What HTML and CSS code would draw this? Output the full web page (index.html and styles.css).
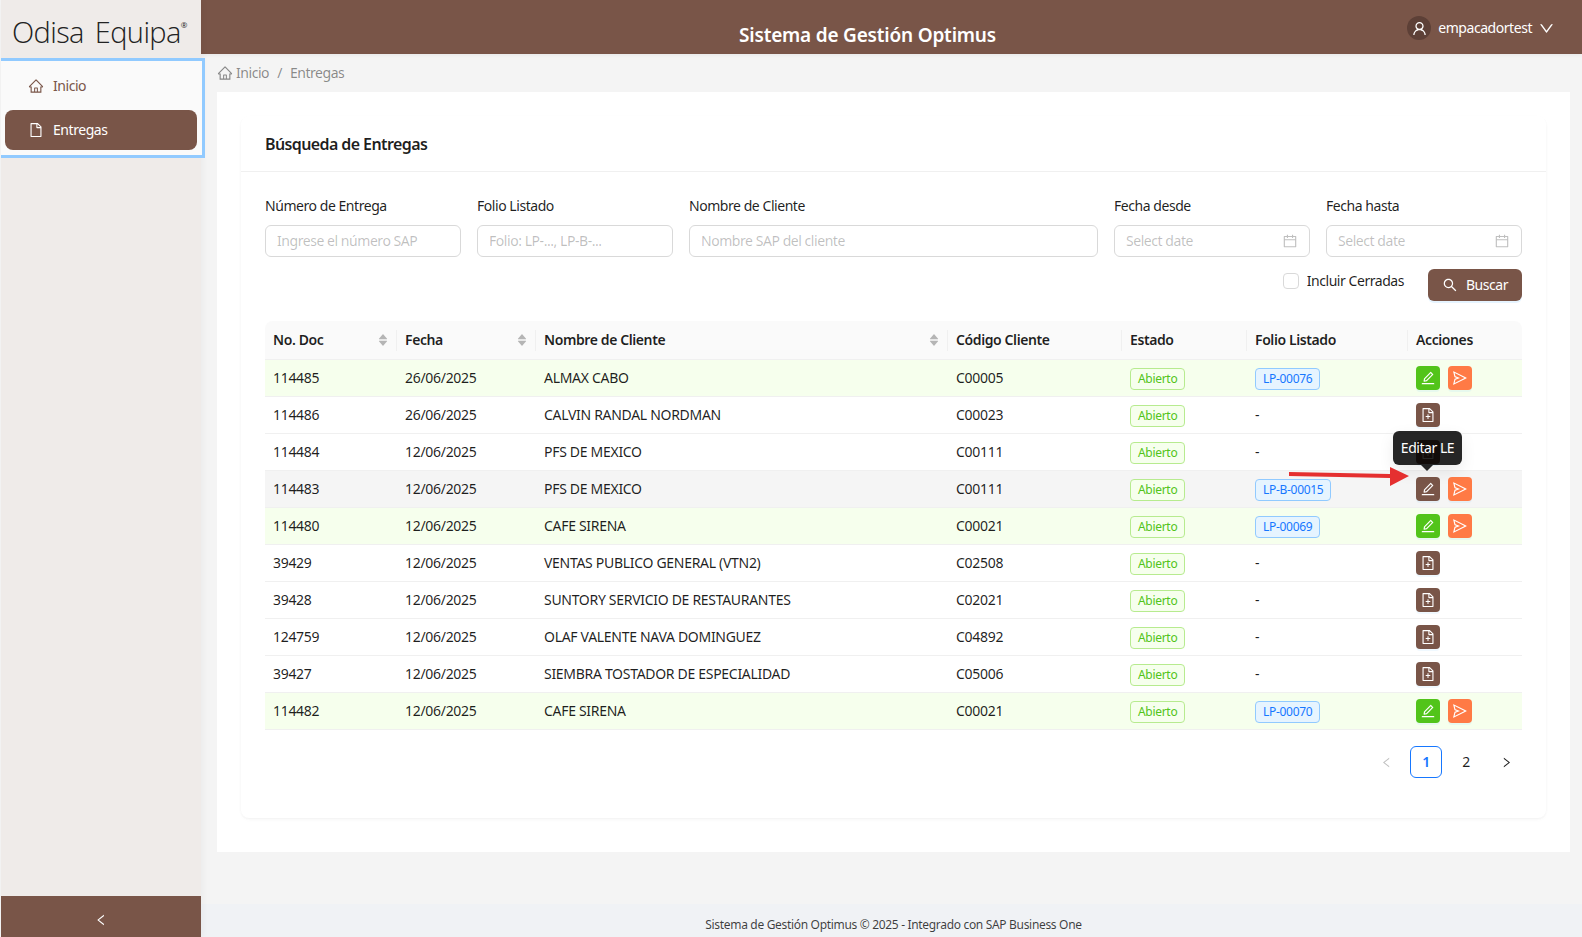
FILE: index.html
```html
<!DOCTYPE html>
<html lang="es">
<head>
<meta charset="utf-8">
<title>Sistema de Gestión Optimus</title>
<link rel="stylesheet" href="styles.css">
</head>
<body>
<svg class="defs" width="0" height="0" aria-hidden="true">
  <symbol id="i-home" viewBox="0 0 1024 1024"><path d="M946.5 505L560.1 118.8l-25.9-25.9a31.5 31.5 0 0 0-44.4 0L77.5 505a63.9 63.9 0 0 0-18.8 46c.4 35.2 29.7 63.3 64.9 63.3h42.5V940h691.8V614.3h43.4c17.1 0 33.2-6.7 45.3-18.8a63.6 63.6 0 0 0 18.7-45.3c0-17-6.7-33.1-18.8-45.2zM568 868H456V664h112v204zm217.9-325.7V868H632V640c0-22.1-17.9-40-40-40H432c-22.1 0-40 17.9-40 40v228H238.1V542.3h-96l370-369.7 23.1 23.1L882 542.3h-96.1z"/></symbol>
  <symbol id="i-file" viewBox="0 0 1024 1024"><path d="M854.6 288.6L639.4 73.4c-6-6-14.1-9.4-22.6-9.4H192c-17.7 0-32 14.3-32 32v832c0 17.7 14.3 32 32 32h640c17.7 0 32-14.3 32-32V311.3c0-8.5-3.4-16.7-9.4-22.7zM790.2 326H602V137.8L790.2 326zm1.8 562H232V136h302v216a42 42 0 0 0 42 42h216v494z"/></symbol>
  <symbol id="i-user" viewBox="0 0 1024 1024"><path d="M858.5 763.6a374 374 0 0 0-80.6-119.5 375.63 375.63 0 0 0-119.5-80.6c-.4-.2-.8-.3-1.2-.5C719.5 518 760 444.7 760 362c0-137-111-248-248-248S264 225 264 362c0 82.7 40.5 156 102.8 201.1-.4.2-.8.3-1.2.5-44.8 18.9-85 46-119.5 80.6a375.63 375.63 0 0 0-80.6 119.5A371.7 371.7 0 0 0 136 901.8a8 8 0 0 0 8 8.2h60c4.4 0 7.9-3.5 8-7.8 2-77.2 33-149.5 87.8-204.3 56.7-56.7 132-87.9 212.2-87.9s155.5 31.2 212.2 87.9C779 752.7 810 825 812 902.2c.1 4.4 3.6 7.8 8 7.8h60a8 8 0 0 0 8-8.2c-1-47.8-10.9-94.3-29.5-138.2zM512 534c-45.9 0-89.1-17.9-121.6-50.4S340 407.9 340 362c0-45.9 17.9-89.1 50.4-121.6S466.1 190 512 190s89.1 17.9 121.6 50.4S684 316.1 684 362c0 45.9-17.9 89.1-50.4 121.6S557.9 534 512 534z"/></symbol>
  <symbol id="i-down" viewBox="0 0 1024 1024"><path d="M884 256h-75c-5.1 0-9.9 2.5-12.9 6.6L512 654.2 227.9 262.6c-3-4.1-7.8-6.6-12.9-6.6h-75c-6.5 0-10.3 7.4-6.5 12.7l352.6 486.1c12.8 17.6 39 17.6 51.7 0l352.6-486.1c3.9-5.3.1-12.7-6.4-12.7z"/></symbol>
  <symbol id="i-left" viewBox="0 0 1024 1024"><path d="M724 218.3V141c0-6.7-7.7-10.4-12.9-6.3L260.3 486.8a31.86 31.86 0 0 0 0 50.3l450.8 352.1c5.3 4.1 12.9.4 12.9-6.3v-77.3c0-4.9-2.3-9.6-6.1-12.6l-360-281 360-281.1c3.8-3 6.1-7.7 6.1-12.6z"/></symbol>
  <symbol id="i-right" viewBox="0 0 1024 1024"><path d="M765.7 486.8L314.9 134.7A7.97 7.97 0 0 0 302 141v77.3c0 4.9 2.3 9.6 6.1 12.6l360 281.1-360 281.1c-3.9 3-6.1 7.7-6.1 12.6V883c0 6.7 7.7 10.4 12.9 6.3l450.8-352.1a31.96 31.96 0 0 0 0-50.4z"/></symbol>
  <symbol id="i-search" viewBox="0 0 1024 1024"><path d="M909.6 854.5L649.9 594.8C690.2 542.7 712 479 712 412c0-80.2-31.3-155.4-87.9-212.1-56.6-56.7-132-87.9-212.1-87.9s-155.5 31.3-212.1 87.9C143.2 256.5 112 331.8 112 412c0 80.1 31.3 155.5 87.9 212.1C256.5 680.8 331.8 712 412 712c67 0 130.6-21.8 182.7-62l259.7 259.6a8.2 8.2 0 0 0 11.6 0l43.6-43.5a8.2 8.2 0 0 0 0-11.6zM570.4 570.4C528 612.7 471.8 636 412 636s-116-23.3-158.4-65.6C211.3 528 188 471.8 188 412s23.3-116.1 65.6-158.4C296 211.3 352.2 188 412 188s116.1 23.2 158.4 65.6S636 352.2 636 412s-23.3 116.1-65.6 158.4z"/></symbol>
  <symbol id="i-cal" viewBox="0 0 1024 1024"><path d="M880 184H712v-64c0-4.4-3.6-8-8-8h-56c-4.4 0-8 3.6-8 8v64H384v-64c0-4.4-3.6-8-8-8h-56c-4.4 0-8 3.6-8 8v64H144c-17.7 0-32 14.3-32 32v664c0 17.7 14.3 32 32 32h736c17.7 0 32-14.3 32-32V216c0-17.7-14.3-32-32-32zm-40 656H184V460h656v380zM184 392V256h128v48c0 4.4 3.6 8 8 8h56c4.4 0 8-3.6 8-8v-48h256v48c0 4.4 3.6 8 8 8h56c4.4 0 8-3.6 8-8v-48h128v136H184z"/></symbol>
  <symbol id="i-edit" viewBox="0 0 1024 1024"><path d="M257.7 752c2 0 4-.2 6-.5L431.9 722c2-.4 3.9-1.3 5.3-2.8l423.9-423.9a9.96 9.96 0 0 0 0-14.1L694.9 114.9c-1.9-1.9-4.4-2.9-7.1-2.9s-5.2 1-7.1 2.9L256.8 538.8c-1.5 1.5-2.4 3.3-2.8 5.3l-29.5 168.2a33.5 33.5 0 0 0 9.4 29.8c6.6 6.4 14.9 9.9 23.8 9.9zm67.4-174.4L687.8 215l73.3 73.3-362.7 362.6-88.9 15.7 15.6-89zM880 836H144c-17.7 0-32 14.3-32 32v36c0 4.4 3.6 8 8 8h784c4.4 0 8-3.6 8-8v-36c0-17.7-14.3-32-32-32z"/></symbol>
  <symbol id="i-send" viewBox="0 0 1024 1024"><path d="M931.4 498.9L94.9 79.5c-3.4-1.7-7.3-2.1-11-1.2a15.99 15.99 0 0 0-11.7 19.3l86.2 352.2c1.3 5.3 5.2 9.6 10.4 11.3l147.7 50.7-147.6 50.7c-5.2 1.8-9.1 6-10.3 11.3L72.2 926.5c-.9 3.7-.5 7.6 1.2 10.9 3.9 7.9 13.5 11.1 21.5 7.2l836.5-417c3.1-1.5 5.6-4.1 7.2-7.1 3.9-8 .7-17.6-7.2-21.6zM170.8 826.3l50.3-205.6 295.2-101.3c2.3-.8 4.2-2.6 5-5 1.4-4.2-.8-8.7-5-10.2L221.1 403 171 198.2l628 314.9-628.2 313.2z"/></symbol>
  <symbol id="i-fileadd" viewBox="0 0 1024 1024"><path d="M854.6 288.6L639.4 73.4c-6-6-14.1-9.4-22.6-9.4H192c-17.7 0-32 14.3-32 32v832c0 17.7 14.3 32 32 32h640c17.7 0 32-14.3 32-32V311.3c0-8.5-3.4-16.7-9.4-22.7zM790.2 326H602V137.8L790.2 326zm1.8 562H232V136h302v216a42 42 0 0 0 42 42h216v494zM544 472c0-4.4-3.6-8-8-8h-48c-4.4 0-8 3.6-8 8v108H372c-4.4 0-8 3.6-8 8v48c0 4.4 3.6 8 8 8h108v108c0 4.4 3.6 8 8 8h48c4.4 0 8-3.6 8-8V644h108c4.4 0 8-3.6 8-8v-48c0-4.4-3.6-8-8-8H544V472z"/></symbol>
  <symbol id="i-sort" viewBox="0 0 1024 1024"><path d="M858.9 409L530.5 28.2c-9.4-10.9-27.5-10.9-37 0L165.1 409c-12.2 14.2-1.2 35 18.5 35h656.8c19.7 0 30.7-20.8 18.5-35z"/><path d="M840.4 580H183.6c-19.7 0-30.7 20.8-18.5 35l328.4 380.8c9.4 10.9 27.5 10.9 37 0L858.9 615c12.2-14.2 1.2-35-18.5-35z"/></symbol>
</svg>

<div class="app">
  <aside class="sidebar">
    <div class="logo">Odisa Equipa<sup class="logo-r">®</sup></div>
    <nav class="menu">
      <a class="menu-item"><svg class="ico"><use href="#i-home"/></svg><span>Inicio</span></a>
      <a class="menu-item active"><svg class="ico"><use href="#i-file"/></svg><span>Entregas</span></a>
    </nav>
    <div class="side-spacer"></div>
    <div class="collapse"><svg class="ico"><use href="#i-left"/></svg></div>
  </aside>

  <div class="right">
    <header class="header">
      <div class="title">Sistema de Gestión Optimus</div>
      <div class="user">
        <span class="avatar"><svg class="ico"><use href="#i-user"/></svg></span>
        <span class="uname">empacadortest</span>
        <svg class="ico chev"><use href="#i-down"/></svg>
      </div>
    </header>

    <div class="page">
      <div class="crumbs">
        <svg class="ico"><use href="#i-home"/></svg><span class="crumb-home">Inicio</span>
        <span class="crumb-sep">/</span><span>Entregas</span>
      </div>
      <main class="content">
        <section class="card">
          <h2 class="card-head">Búsqueda de Entregas</h2>
          <div class="card-body">
            <div class="filters">
              <label class="field"><span class="lbl">Número de Entrega</span><span class="input ph">Ingrese el número SAP</span></label>
              <label class="field"><span class="lbl">Folio Listado</span><span class="input ph">Folio: LP-..., LP-B-...</span></label>
              <label class="field"><span class="lbl">Nombre de Cliente</span><span class="input ph">Nombre SAP del cliente</span></label>
              <label class="field"><span class="lbl">Fecha desde</span><span class="input ph date">Select date<svg class="ico"><use href="#i-cal"/></svg></span></label>
              <label class="field"><span class="lbl">Fecha hasta</span><span class="input ph date">Select date<svg class="ico"><use href="#i-cal"/></svg></span></label>
            </div>
            <div class="actions-row">
              <label class="check"><span class="box"></span><span>Incluir Cerradas</span></label>
              <button class="btn-search"><svg class="ico"><use href="#i-search"/></svg><span>Buscar</span></button>
            </div>

            <table class="grid">
              <colgroup>
                <col class="c1"><col class="c2"><col class="c3"><col class="c4"><col class="c5"><col class="c6"><col class="c7">
              </colgroup>
              <thead>
                <tr>
                  <th class="sep"><div class="th-in">No. Doc<svg class="sort"><use href="#i-sort"/></svg></div></th>
                  <th class="sep"><div class="th-in">Fecha<svg class="sort"><use href="#i-sort"/></svg></div></th>
                  <th class="sep"><div class="th-in">Nombre de Cliente<svg class="sort"><use href="#i-sort"/></svg></div></th>
                  <th class="sep">Código Cliente</th>
                  <th class="sep">Estado</th>
                  <th class="sep">Folio Listado</th>
                  <th>Acciones</th>
                </tr>
              </thead>
              <tbody>
                <tr class="hl"><td>114485</td><td>26/06/2025</td><td>ALMAX CABO</td><td>C00005</td><td><span class="tag">Abierto</span></td><td><span class="tag blue">LP-00076</span></td><td><div class="acts"><button class="ib green"><svg class="ico"><use href="#i-edit"/></svg></button><button class="ib orange"><svg class="ico"><use href="#i-send"/></svg></button></div></td></tr>
                <tr><td>114486</td><td>26/06/2025</td><td>CALVIN RANDAL NORDMAN</td><td>C00023</td><td><span class="tag">Abierto</span></td><td>-</td><td><div class="acts"><button class="ib brown"><svg class="ico"><use href="#i-fileadd"/></svg></button></div></td></tr>
                <tr><td>114484</td><td>12/06/2025</td><td>PFS DE MEXICO</td><td>C00111</td><td><span class="tag">Abierto</span></td><td>-</td><td><div class="acts"><button class="ib brown"><svg class="ico"><use href="#i-fileadd"/></svg></button></div></td></tr>
                <tr class="hover"><td>114483</td><td>12/06/2025</td><td>PFS DE MEXICO</td><td>C00111</td><td><span class="tag">Abierto</span></td><td><span class="tag blue">LP-B-00015</span></td><td><div class="acts"><button class="ib brown"><svg class="ico"><use href="#i-edit"/></svg></button><button class="ib orange"><svg class="ico"><use href="#i-send"/></svg></button></div></td></tr>
                <tr class="hl"><td>114480</td><td>12/06/2025</td><td>CAFE SIRENA</td><td>C00021</td><td><span class="tag">Abierto</span></td><td><span class="tag blue">LP-00069</span></td><td><div class="acts"><button class="ib green"><svg class="ico"><use href="#i-edit"/></svg></button><button class="ib orange"><svg class="ico"><use href="#i-send"/></svg></button></div></td></tr>
                <tr><td>39429</td><td>12/06/2025</td><td>VENTAS PUBLICO GENERAL (VTN2)</td><td>C02508</td><td><span class="tag">Abierto</span></td><td>-</td><td><div class="acts"><button class="ib brown"><svg class="ico"><use href="#i-fileadd"/></svg></button></div></td></tr>
                <tr><td>39428</td><td>12/06/2025</td><td>SUNTORY SERVICIO DE RESTAURANTES</td><td>C02021</td><td><span class="tag">Abierto</span></td><td>-</td><td><div class="acts"><button class="ib brown"><svg class="ico"><use href="#i-fileadd"/></svg></button></div></td></tr>
                <tr><td>124759</td><td>12/06/2025</td><td>OLAF VALENTE NAVA DOMINGUEZ</td><td>C04892</td><td><span class="tag">Abierto</span></td><td>-</td><td><div class="acts"><button class="ib brown"><svg class="ico"><use href="#i-fileadd"/></svg></button></div></td></tr>
                <tr><td>39427</td><td>12/06/2025</td><td>SIEMBRA TOSTADOR DE ESPECIALIDAD</td><td>C05006</td><td><span class="tag">Abierto</span></td><td>-</td><td><div class="acts"><button class="ib brown"><svg class="ico"><use href="#i-fileadd"/></svg></button></div></td></tr>
                <tr class="hl"><td>114482</td><td>12/06/2025</td><td>CAFE SIRENA</td><td>C00021</td><td><span class="tag">Abierto</span></td><td><span class="tag blue">LP-00070</span></td><td><div class="acts"><button class="ib green"><svg class="ico"><use href="#i-edit"/></svg></button><button class="ib orange"><svg class="ico"><use href="#i-send"/></svg></button></div></td></tr>
              </tbody>
            </table>

            <div class="pager">
              <span class="pg off"><svg class="ico small"><use href="#i-left"/></svg></span>
              <span class="pg cur">1</span>
              <span class="pg">2</span>
              <span class="pg"><svg class="ico small"><use href="#i-right"/></svg></span>
            </div>
          </div>
        </section>
      </main>
    </div>

    <footer class="footer">Sistema de Gestión Optimus © 2025 - Integrado con SAP Business One</footer>
  </div>
</div>

<div class="tooltip">Editar LE</div>
<svg class="red-arrow" width="125" height="30" viewBox="0 0 125 30" aria-hidden="true">
  <path d="M0 9 L101 11 L101 4 L120 13 L101 23 L101 15 L0 13 Z" fill="#e53030"/>
</svg>
</body>
</html>
```

FILE: styles.css
```css
* { box-sizing: border-box; }
html, body { margin: 0; height: 100%; }
body {
  background: #f4f4f4;
  color: rgba(0,0,0,.88);
  font: 14px/22px "Noto Sans", "Open Sans", sans-serif;
  letter-spacing: -.45px;
  overflow: hidden;
}
.defs { position: absolute; }
.ico { width: 16px; height: 16px; fill: currentColor; flex: none; display: block; }
.app { display: flex; height: 937px; padding-left: 1px; }

/* sidebar */
.sidebar {
  width: 200px; flex: none; display: flex; flex-direction: column;
  background: #efebe9; box-shadow: 2px 0 6px rgba(0,0,0,.04); position: relative; z-index: 2;
}
.logo {
  height: 58px; padding: 14px 0 0 11px;
  font: 300 29px/36px "Open Sans", sans-serif; letter-spacing: -.6px; word-spacing: 4px; color: #222; white-space: nowrap;
}
.logo-r { font-size: 8px; line-height: 0; vertical-align: 15px; letter-spacing: 0; font-weight: 400; }
.menu {
  width: 204px; height: 100px; padding: 5px 5px 0 4px; display: flex; flex-direction: column; gap: 4px;
  background: #fafafa; border: 3px solid #91caff; border-left: 0;
}
.menu-item {
  height: 40px; border-radius: 8px; display: flex; align-items: center; gap: 9px;
  padding-left: 23px; color: #795548;
}
.menu-item.active { background: #795548; color: #fff; }
.side-spacer { flex: 1; }
.collapse { height: 41px; padding-top: 6px; background: #795548; color: #fff; display: flex; align-items: center; justify-content: center; }
.collapse .ico { width: 14px; height: 14px; }

/* header */
.right { flex: 1; min-width: 0; display: flex; flex-direction: column; }
.header {
  height: 54px; flex: none; background: #795548; color: #fff; display: flex; align-items: center;
  box-shadow: 0 1px 4px rgba(0,0,0,.06); position: relative; z-index: 1;
}
.title { flex: 1; text-align: center; padding: 16px 0 0 136px; font-size: 19px; line-height: 28px; font-weight: 600; letter-spacing: -.2px; }
.user { width: 184px; flex: none; display: flex; align-items: center; justify-content: flex-end; padding: 2px 27px 0 0; height: 54px; }
.avatar { width: 24px; height: 24px; border-radius: 50%; background: #5d4037; display: flex; align-items: center; justify-content: center; margin-right: 7px; }
.avatar .ico { width: 17px; height: 17px; }
.uname { margin-right: 6px; }
.chev { width: 17px; height: 17px; }

/* page */
.page { flex: 1; padding: 0 12px 0 16px; min-height: 0; }
.crumbs { height: 38px; display: flex; align-items: center; color: rgba(0,0,0,.45); }
.crumb-home { margin-left: 3px; }
.crumb-sep { margin: 0 8px; }
.content { background: #fff; height: 760px; padding: 24px; }
.card { background: #fff; height: 702px; border-radius: 8px; box-shadow: 0 1px 2px rgba(0,0,0,.03), 0 1px 6px -1px rgba(0,0,0,.02), 0 2px 4px rgba(0,0,0,.02); }
.card-head { margin: 0; height: 56px; padding: 0 24px; font-size: 16px; line-height: 56px; font-weight: 600; letter-spacing: -.6px; border-bottom: 1px solid #f0f0f0; }
.card-body { padding: 23px 24px 0; }

.filters { display: grid; grid-template-columns: 196px 196px 1fr 196px 196px; gap: 16px; }
.field { display: flex; flex-direction: column; gap: 8px; }
.lbl { display: block; }
.input {
  height: 32px; border: 1px solid #d9d9d9; border-radius: 6px; padding: 4px 11px;
  display: flex; align-items: center; justify-content: space-between;
}
.ph { color: rgba(0,0,0,.25); }
.actions-row { display: flex; justify-content: flex-end; align-items: flex-start; margin-top: 12px; height: 52px; }
.check { display: flex; align-items: center; gap: 8px; margin-top: 1px; margin-right: 24px; }
.box { width: 16px; height: 16px; border: 1px solid #d9d9d9; border-radius: 4px; background: #fff; }
.btn-search {
  width: 94px; height: 32px; border: 0; border-radius: 6px; background: #795548; color: #fff;
  font: inherit; letter-spacing: inherit; display: flex; align-items: center; justify-content: center; gap: 8px;
  box-shadow: 0 2px 0 rgba(5,145,255,.1);
}

/* table */
.grid { width: 100%; border-collapse: separate; border-spacing: 0; table-layout: fixed; }
.c1 { width: 132px; } .c2 { width: 139px; } .c3 { width: 412px; } .c4 { width: 174px; }
.c5 { width: 125px; } .c6 { width: 161px; } .c7 { width: 114px; }
.grid th {
  height: 39px; padding: 0 8px; background: #fafafa; text-align: left; font-weight: 600;
  border-bottom: 1px solid #f0f0f0; position: relative; letter-spacing: -.4px;
}
.grid th:first-child { border-top-left-radius: 8px; }
.grid th:last-child { border-top-right-radius: 8px; }
.grid th.sep::after {
  content: ""; position: absolute; right: 0; top: 9px; height: 21px; width: 1px; background: #f0f0f0;
}
.th-in { display: flex; align-items: center; justify-content: space-between; }
.sort { width: 12px; height: 14px; fill: #b5b5b5; }
.grid td { height: 37px; padding: 0 8px; border-bottom: 1px solid #f0f0f0; white-space: nowrap; letter-spacing: -.3px; }
.hl td { background: #f6ffed; }
.hover td { background: #f5f5f5; }
.tag {
  display: inline-block; height: 22px; padding: 0 7px; line-height: 20px; font-size: 12px;
  border: 1px solid #b7eb8f; border-radius: 4px; background: #f6ffed; color: #52c41a; vertical-align: middle;
}
.tag.blue { border-color: #91caff; background: #e6f4ff; color: #1677ff; }
.acts { display: flex; gap: 8px; }
.ib { width: 24px; height: 24px; padding: 0; border: 0; border-radius: 4px; color: #fff; display: flex; align-items: center; justify-content: center; box-shadow: 0 2px 0 rgba(5,145,255,.06); }
.green { background: #52c41a; }
.orange { background: #ff7a45; }
.brown { background: #795548; }

/* pager */
.pager { display: flex; justify-content: flex-end; gap: 8px; margin-top: 16px; }
.pg { width: 32px; height: 32px; border-radius: 6px; display: flex; align-items: center; justify-content: center; }
.pg.cur { border: 1px solid #1677ff; color: #1677ff; font-weight: 600; }
.pg.off { color: rgba(0,0,0,.25); }
.ico.small { width: 13px; height: 13px; }

.footer {
  height: 33px; flex: none; background: #f0f2f5; text-align: center; padding: 12px 0 0 4px;
  font-size: 12px; line-height: 18px; color: rgba(0,0,0,.75); letter-spacing: -.32px;
}

/* overlays */
.tooltip {
  position: absolute; left: 1393px; top: 431px; width: 69px; height: 34px; border-radius: 6px;
  background: rgba(0,0,0,.85); color: #fff; text-align: center; line-height: 34px; font-size: 14px;
  box-shadow: 0 6px 16px rgba(0,0,0,.08);
}
.tooltip::after {
  content: ""; position: absolute; left: 28px; bottom: -6px; border: 6px solid transparent; border-bottom: 0;
  border-top-color: rgba(0,0,0,.85);
}
.red-arrow { position: absolute; left: 1289px; top: 463px; }
```
